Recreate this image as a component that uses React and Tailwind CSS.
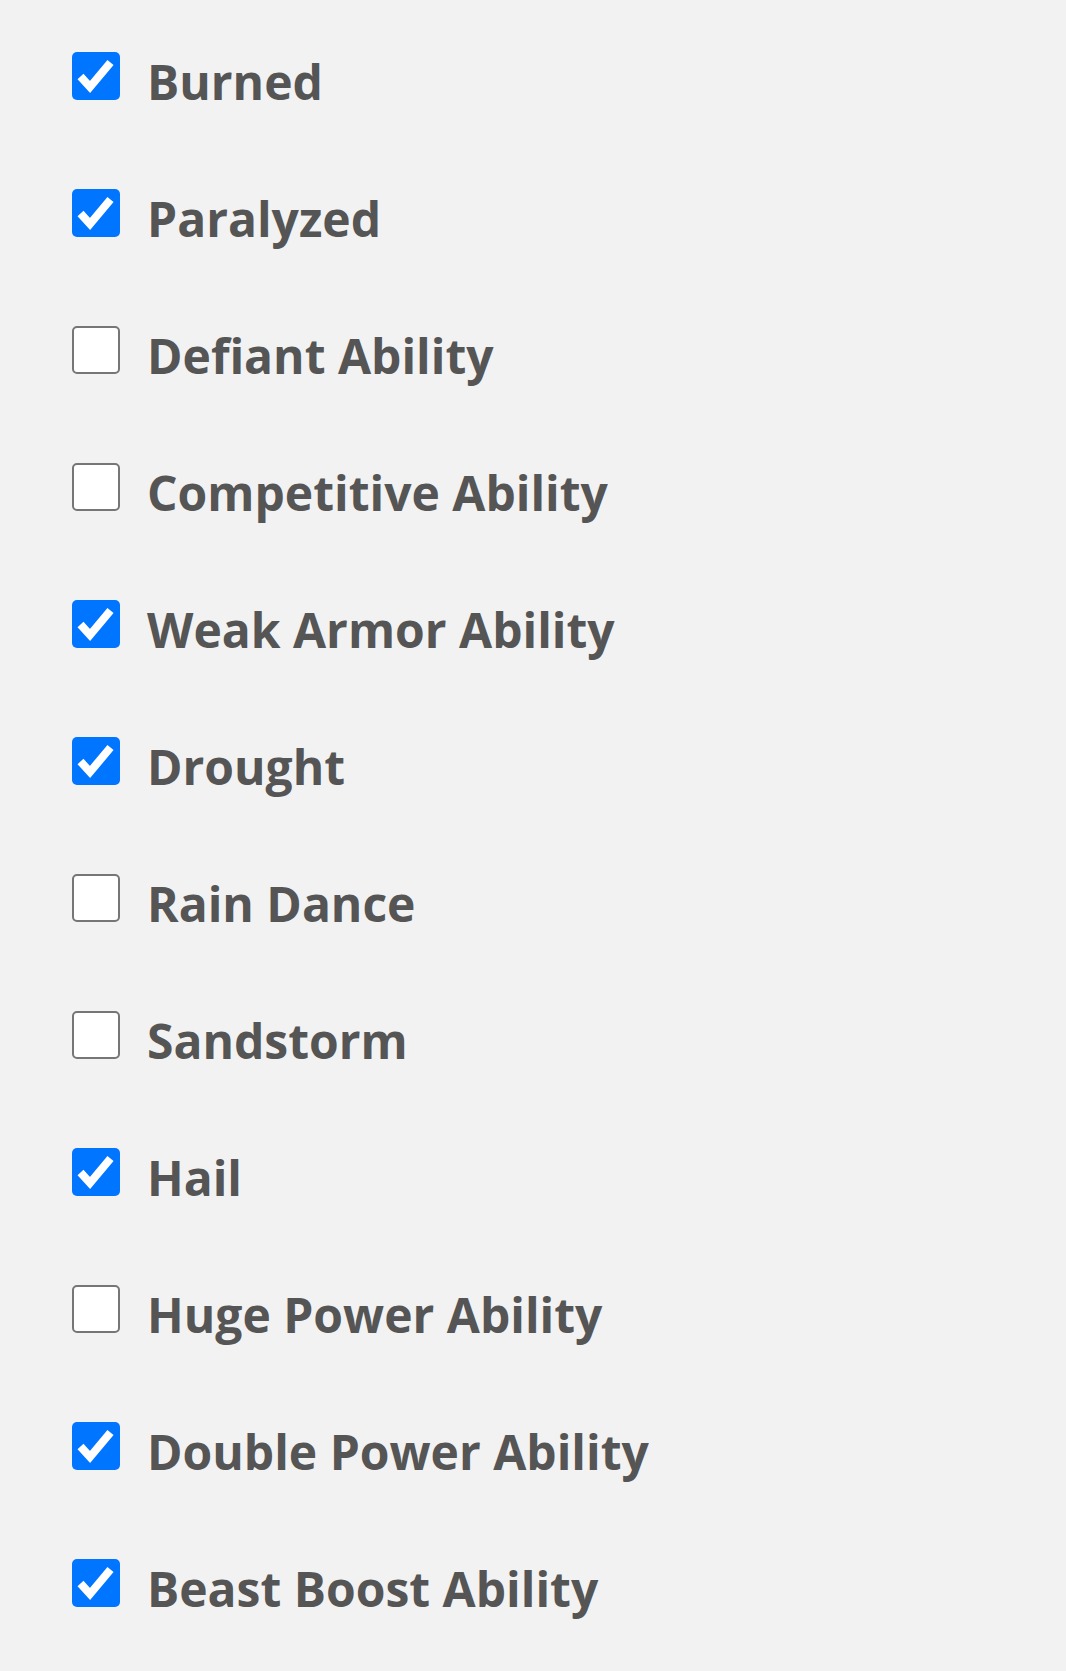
import React, { useState } from 'react';

const initialItems = [
  { id: 'burned', label: 'Burned', checked: true },
  { id: 'paralyzed', label: 'Paralyzed', checked: true },
  { id: 'defiant', label: 'Defiant Ability', checked: false },
  { id: 'competitive', label: 'Competitive Ability', checked: false },
  { id: 'weak-armor', label: 'Weak Armor Ability', checked: true },
  { id: 'drought', label: 'Drought', checked: true },
  { id: 'rain-dance', label: 'Rain Dance', checked: false },
  { id: 'sandstorm', label: 'Sandstorm', checked: false },
  { id: 'hail', label: 'Hail', checked: true },
  { id: 'huge-power', label: 'Huge Power Ability', checked: false },
  { id: 'double-power', label: 'Double Power Ability', checked: true },
  { id: 'beast-boost', label: 'Beast Boost Ability', checked: true },
];

const Box = ({ checked }) => {
  if (checked) {
    return (
      <span className="flex h-12 w-12 shrink-0 items-center justify-center rounded-[5px] bg-[#0075ff]">
        <svg viewBox="0 0 48 48" className="h-12 w-12">
          <path d="M8.5 24.5 L18 35 L38.5 10.5" fill="none" stroke="white" strokeWidth="8" />
        </svg>
      </span>
    );
  }
  return <span className="h-12 w-12 shrink-0 rounded-[5px] border-2 border-[#767676] bg-white" />;
};

const App = () => {
  const [items, setItems] = useState(initialItems);

  const toggle = (id) => {
    setItems(prev => prev.map(it => (it.id === id ? { ...it, checked: !it.checked } : it)));
  };

  return (
    <div className="min-h-screen bg-[#f2f2f2] pl-[72px] pt-[52px] font-['Open_Sans',sans-serif]">
      <div className="flex flex-col gap-[89px]">
        {items.map(item => (
          <label key={item.id} className="flex h-12 cursor-pointer items-start gap-[27px]" onClick={() => toggle(item.id)}>
            <Box checked={item.checked} />
            <span className="mt-[6px] text-[48px] font-bold leading-none text-[#555555]">{item.label}</span>
          </label>
        ))}
      </div>
    </div>
  );
};

export default App;
